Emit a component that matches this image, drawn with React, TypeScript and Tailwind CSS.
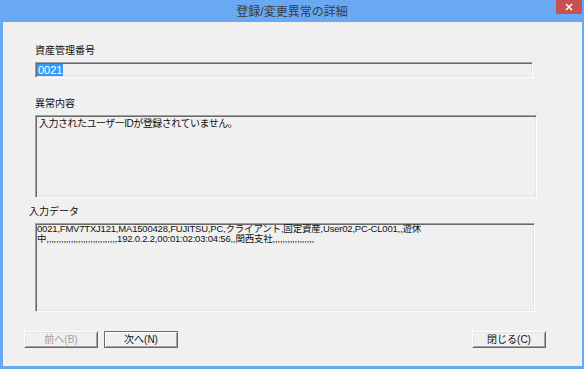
const jp = "font-['Liberation_Sans','Noto_Sans_CJK_JP',sans-serif]";

function Sunken({ className, children }: { className: string; children?: React.ReactNode }) {
  return (
    <div
      className={`border border-t-[#a0a0a0] border-l-[#a0a0a0] border-b-white border-r-white shadow-[inset_1px_1px_0_#696969,inset_-1px_-1px_0_#e3e3e3] ${className}`}
    >
      {children}
    </div>
  );
}

function Button({ label, disabled, focused }: { label: string; disabled?: boolean; focused?: boolean }) {
  return (
    <button
      disabled={disabled}
      className={`w-[74px] h-[17px] flex items-center justify-center text-[10px] leading-[12px] border ${
        focused
          ? "border-[#6b6b6b] shadow-[inset_1px_1px_0_#ffffff,inset_-1px_-1px_0_#a0a0a0]"
          : "border-t-white border-l-white border-b-[#696969] border-r-[#696969] shadow-[inset_1px_1px_0_#e3e3e3,inset_-1px_-1px_0_#a0a0a0]"
      } ${disabled ? "text-[#a0a0a0]" : "text-[#111]"}`}
    >
      {label}
    </button>
  );
}

export default function App() {
  return (
    <div className={`w-[584px] h-[369px] bg-[#69a9f3] flex flex-col ${jp}`}>
      {/* タイトルバー */}
      <div className="relative h-[22px] flex items-center justify-center">
        <span className="text-[12px] leading-[14px] text-[#3a3a3a] pt-[1px]">登録/変更異常の詳細</span>
        <div className="absolute right-[2px] top-0 w-[26px] h-[14px] bg-[#c75050] flex items-center justify-center">
          <svg width="8" height="8" viewBox="0 0 8 8">
            <path d="M1 1L7 7M7 1L1 7" stroke="#fff" strokeWidth="1.6" />
          </svg>
        </div>
      </div>

      {/* 本体 */}
      <div className="flex-1 ml-[3px] mr-[2px] mb-[3px] bg-[#f0f0f0] flex flex-col pt-[23px] text-[#111]">
        <div className="ml-[32px] h-[12px] text-[10px] leading-[12px]">資産管理番号</div>
        <Sunken className="ml-[32px] mt-[5px] w-[498px] h-[16px] flex items-center pl-[1px]">
          <span className="bg-[#3399ff] text-white text-[11px] leading-[12px] px-[1px]">0021</span>
        </Sunken>

        <div className="ml-[32px] mt-[20px] h-[12px] text-[10px] leading-[12px]">異常内容</div>
        <Sunken className="ml-[32px] mt-[5px] w-[502px] h-[83px] pl-[3px] pt-[2px]">
          <div className="text-[10px] leading-[12px] tracking-[-0.5px]">入力されたユーザーIDが登録されていません。</div>
        </Sunken>

        <div className="ml-[26px] mt-[8px] h-[12px] text-[10px] leading-[12px]">入力データ</div>
        <Sunken className="ml-[32px] mt-[5px] w-[500px] h-[89px] pl-[1px]">
          <div className="text-[9.5px] leading-[10px] whitespace-pre tracking-[-0.2px]">
            {"0021,FMV7TXJ121,MA1500428,FUJITSU,PC,クライアント,固定資産,User02,PC-CL001,,遊休\n中,,,,,,,,,,,,,,,,,,,,,,,,,,,,,192.0.2.2,00:01:02:03:04:56,,関西支社,,,,,,,,,,,,,,,,,"}
          </div>
        </Sunken>

        <div className="mt-[19px] flex items-center">
          <div className="ml-[21px]">
            <Button label="前へ(B)" disabled />
          </div>
          <div className="ml-[6px]">
            <Button label="次へ(N)" focused />
          </div>
          <div className="ml-auto mr-[36px]">
            <Button label="閉じる(C)" />
          </div>
        </div>
      </div>
    </div>
  );
}
